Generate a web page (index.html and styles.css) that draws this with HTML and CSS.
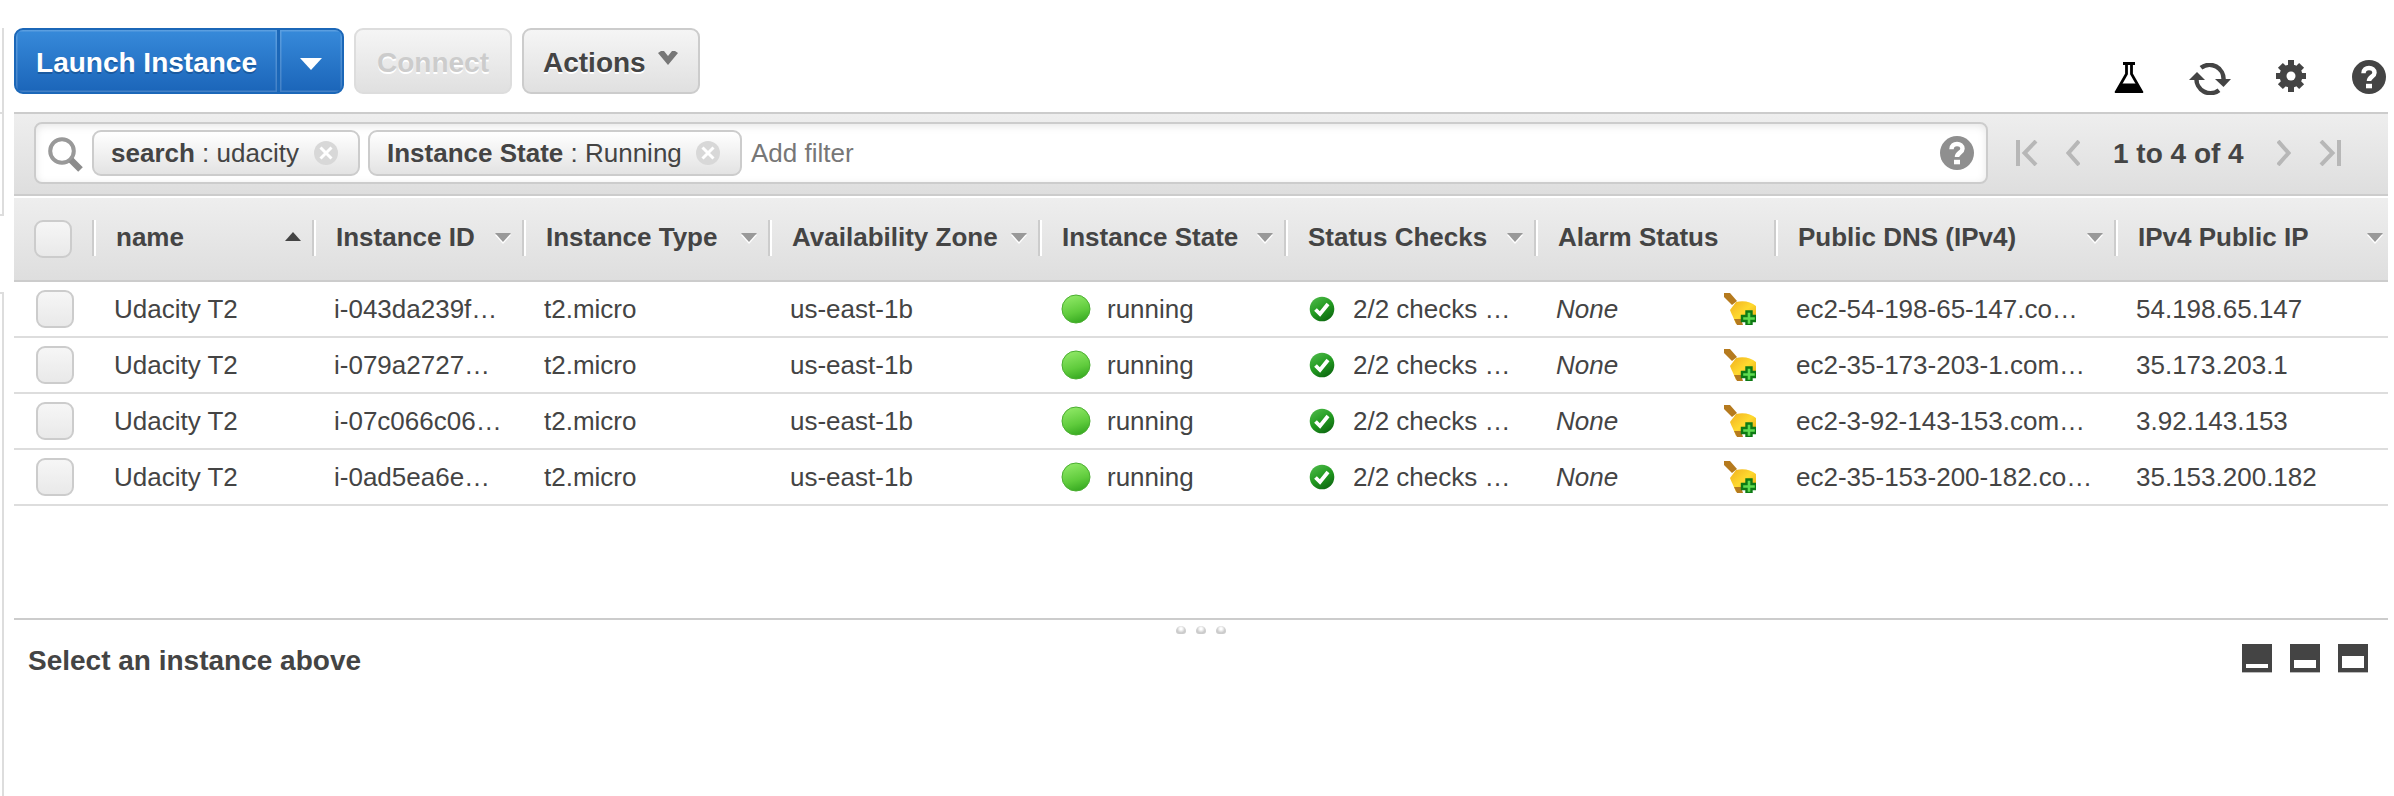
FILE: index.html
```html
<!DOCTYPE html>
<html lang="en">
<head>
<meta charset="utf-8">
<title>Instances</title>
<link rel="stylesheet" href="styles.css">
</head>
<body>
<svg class="defs" width="0" height="0">
  <defs>
    <linearGradient id="runGrad" x1=".35" y1="0" x2=".65" y2="1"><stop offset="0" stop-color="#8fe866"/><stop offset=".6" stop-color="#5fcb3c"/><stop offset="1" stop-color="#35a820"/></linearGradient>
    <linearGradient id="okGrad" x1=".2" y1="0" x2=".8" y2="1"><stop offset="0" stop-color="#4cb848"/><stop offset=".5" stop-color="#229a20"/><stop offset="1" stop-color="#0c6410"/></linearGradient>
    <linearGradient id="bellGrad" x1="0" y1="0" x2="1" y2="1"><stop offset="0" stop-color="#f0b020"/><stop offset=".5" stop-color="#ffd92e"/><stop offset="1" stop-color="#e0a010"/></linearGradient>
  </defs>
  <symbol id="dot" viewBox="0 0 30 30"><circle cx="15" cy="15" r="14" fill="url(#runGrad)" stroke="#4aae30" stroke-width="1"/></symbol>
  <symbol id="ok" viewBox="0 0 26 26"><circle cx="13" cy="13" r="12.300" fill="url(#okGrad)"/><path d="M6.500 13.500l4.500 4.500 8-10" fill="none" stroke="#fff" stroke-width="3.800"/></symbol>
  <symbol id="bell" viewBox="0 0 32 32"><path d="M0 0h6l7 8-5 4-8-8z" fill="#b57a1e"/><path d="M12 9C20 7 27 9 32 13v9L12 31C11 28 8 22 6 17z" fill="url(#bellGrad)"/><path d="M10 26l3 6h6l-2-6z" fill="#b57a1e"/><path d="M22.500 18.500h5v4.500h4.500v5h-4.500v4h-5v-4h-4.500v-5h4.500z" fill="#5fdc50" stroke="#0d7a14" stroke-width="2.400"/></symbol>
  <symbol id="help" viewBox="0 0 34 34"><circle cx="17" cy="17" r="17" fill="currentColor"/><path d="M11.500 13.200c0-3.600 2.500-5.200 5.500-5.200s5.500 1.700 5.500 4.700c0 3.900-5.500 4-5.500 8.300" fill="none" stroke="#fff" stroke-width="4.500"/><rect x="14" y="23.800" width="6" height="4.500" fill="#fff"/></symbol>
  <symbol id="x" viewBox="0 0 24 24"><circle cx="12" cy="12" r="12" fill="#d8d8d8"/><path d="M6.500 6.500l11 11m0-11l-11 11" stroke="#fff" stroke-width="3"/></symbol>
  <symbol id="down" viewBox="0 0 16 12"><path d="M0 2h16l-8 9z" fill="#fff"/><path d="M0 0h16l-8 9z" fill="#999"/></symbol>
</svg>
<div class="rail"><i class="rail-top"></i><i class="rail-tab"></i><i class="rail-gap"></i><i class="rail-bottom"></i></div>
<main class="page">
  <div class="toolbar">
    <div class="split"><button class="launch">Launch Instance</button><button class="launch-more"><svg width="22" height="12" viewBox="0 0 22 12"><path d="M0 0h22L11 12z" fill="#fff"/></svg></button></div>
    <button class="btn disabled">Connect</button>
    <button class="btn actions">Actions<svg width="20" height="14" viewBox="0 0 20 14"><path d="M0 2l3-2h3l4 5 4-5h3l3 2-10 12z" fill="#777"/></svg></button>
    <div class="tools">
      <svg class="flask" width="30" height="32" viewBox="0 0 30 32"><path d="M9 1.500h12M12.500 2v10L3 28.500h24L17.500 12V2" fill="none" stroke="#000" stroke-width="2.800"/><path d="M7 21.500h16L29.500 31H.5z" fill="#000"/></svg>
      <svg class="refresh" width="42" height="32" viewBox="0 0 42 32"><path d="M12 4.800A14 14 0 0 1 34.500 17M30 27.200A14 14 0 0 1 7.500 15" fill="none" stroke="#444" stroke-width="4.500"/><path d="M26 16h16l-7.500 8zM0 17h16L8 9z" fill="#444"/></svg>
      <svg class="gear" width="30" height="32" viewBox="-15 -16 30 32"><g fill="#444"><circle r="11.500"/><rect x="-3" y="-16" width="6" height="32"/><rect x="-15" y="-3" width="30" height="6"/><g transform="rotate(45)"><rect x="-3.500" y="-15" width="7" height="30"/><rect x="-15" y="-3.500" width="30" height="7"/></g></g><circle r="4.500" fill="#fff"/></svg>
      <svg class="help-main" width="34" height="34"><use href="#help"/></svg>
    </div>
  </div>
  <div class="filterbar">
    <div class="search">
      <svg class="mag" width="36" height="36" viewBox="0 0 36 36"><circle cx="14" cy="14" r="11.800" fill="none" stroke="#999" stroke-width="4"/><path d="M23 23l9.500 9.500" stroke="#8c8c8c" stroke-width="6.500"/></svg>
      <span class="chip chip-a"><span><b>search</b> : udacity</span><svg width="24" height="24"><use href="#x"/></svg></span>
      <span class="chip chip-b"><span><b>Instance State</b> : Running</span><svg width="24" height="24"><use href="#x"/></svg></span>
      <span class="placeholder">Add filter</span>
      <svg class="help-sub" width="34" height="34"><use href="#help"/></svg>
    </div>
    <div class="pager">
      <svg width="22" height="26" viewBox="0 0 22 26"><path d="M2 0v26M20 1L8.500 13 20 25" fill="none" stroke="#b7b7b7" stroke-width="4"/></svg>
      <svg class="prev" width="14" height="26" viewBox="0 0 14 26"><path d="M13 1L2.500 13 13 25" fill="none" stroke="#b7b7b7" stroke-width="4"/></svg>
      <b>1 to 4 of 4</b>
      <svg class="next" width="14" height="26" viewBox="0 0 14 26"><path d="M1 1l10.500 12L1 25" fill="none" stroke="#b7b7b7" stroke-width="4"/></svg>
      <svg width="22" height="26" viewBox="0 0 22 26"><path d="M20 0v26M2 1l11.500 12L2 25" fill="none" stroke="#b7b7b7" stroke-width="4"/></svg>
    </div>
  </div>
  <div class="grid head">
    <div><span class="check"></span></div>
    <div class="th">name<svg class="sort asc" width="16" height="12" viewBox="0 0 16 12"><path d="M0 10h16L8 1z" fill="#444"/></svg></div>
    <div class="th">Instance ID<svg class="sort" width="16" height="12"><use href="#down"/></svg></div>
    <div class="th">Instance Type<svg class="sort" width="16" height="12"><use href="#down"/></svg></div>
    <div class="th">Availability Zone<svg class="sort" width="16" height="12"><use href="#down"/></svg></div>
    <div class="th">Instance State<svg class="sort" width="16" height="12"><use href="#down"/></svg></div>
    <div class="th">Status Checks<svg class="sort" width="16" height="12"><use href="#down"/></svg></div>
    <div class="th">Alarm Status</div>
    <div class="th">Public DNS (IPv4)<svg class="sort" width="16" height="12"><use href="#down"/></svg></div>
    <div class="th last">IPv4 Public IP<svg class="sort" width="16" height="12"><use href="#down"/></svg></div>
  </div>
  <div class="grid row"><div><span class="check"></span></div><div class="td">Udacity T2</div><div class="td">i-043da239f…</div><div class="td">t2.micro</div><div class="td">us-east-1b</div><div class="td state"><svg width="30" height="30"><use href="#dot"/></svg>running</div><div class="td status"><svg width="26" height="26"><use href="#ok"/></svg>2/2 checks …</div><div class="td alarm"><i>None</i><svg width="32" height="32"><use href="#bell"/></svg></div><div class="td">ec2-54-198-65-147.co…</div><div class="td">54.198.65.147</div></div>
  <div class="grid row"><div><span class="check"></span></div><div class="td">Udacity T2</div><div class="td">i-079a2727…</div><div class="td">t2.micro</div><div class="td">us-east-1b</div><div class="td state"><svg width="30" height="30"><use href="#dot"/></svg>running</div><div class="td status"><svg width="26" height="26"><use href="#ok"/></svg>2/2 checks …</div><div class="td alarm"><i>None</i><svg width="32" height="32"><use href="#bell"/></svg></div><div class="td">ec2-35-173-203-1.com…</div><div class="td">35.173.203.1</div></div>
  <div class="grid row"><div><span class="check"></span></div><div class="td">Udacity T2</div><div class="td">i-07c066c06…</div><div class="td">t2.micro</div><div class="td">us-east-1b</div><div class="td state"><svg width="30" height="30"><use href="#dot"/></svg>running</div><div class="td status"><svg width="26" height="26"><use href="#ok"/></svg>2/2 checks …</div><div class="td alarm"><i>None</i><svg width="32" height="32"><use href="#bell"/></svg></div><div class="td">ec2-3-92-143-153.com…</div><div class="td">3.92.143.153</div></div>
  <div class="grid row"><div><span class="check"></span></div><div class="td">Udacity T2</div><div class="td">i-0ad5ea6e…</div><div class="td">t2.micro</div><div class="td">us-east-1b</div><div class="td state"><svg width="30" height="30"><use href="#dot"/></svg>running</div><div class="td status"><svg width="26" height="26"><use href="#ok"/></svg>2/2 checks …</div><div class="td alarm"><i>None</i><svg width="32" height="32"><use href="#bell"/></svg></div><div class="td">ec2-35-153-200-182.co…</div><div class="td">35.153.200.182</div></div>
  <section class="details">
    <div class="grip"><i></i><i></i><i></i></div>
    <div class="details-head"><b>Select an instance above</b>
      <div class="panes">
        <svg width="30" height="29" viewBox="0 0 30 29"><path d="M0 0h30v28H0z" fill="#444"/><path d="M0 28h30v1H0z" fill="#bbb"/><path d="M4 20h22v4H4z" fill="#fff"/></svg>
        <svg width="30" height="29" viewBox="0 0 30 29"><path d="M0 0h30v28H0z" fill="#444"/><path d="M0 28h30v1H0z" fill="#bbb"/><path d="M4 16h22v8H4z" fill="#fff"/></svg>
        <svg width="30" height="29" viewBox="0 0 30 29"><path d="M0 0h30v28H0z" fill="#444"/><path d="M0 28h30v1H0z" fill="#bbb"/><path d="M4 12h22v12H4z" fill="#fff"/></svg>
      </div>
    </div>
  </section>
</main>
</body>
</html>
```
FILE: styles.css
```css
* { box-sizing: border-box; }
body { margin: 0; display: flex; height: 796px; overflow: hidden; background: #fff; color: #444; font-family: "Liberation Sans", Arial, sans-serif; font-size: 26px; }
svg { display: block; flex: none; }
.defs { position: absolute; }
button { font: bold 28px "Liberation Sans", Arial, sans-serif; padding: 0; }

.rail { width: 14px; flex: none; padding-top: 28px; display: flex; flex-direction: column; }
.rail i { width: 4px; border-right: 2px solid #ddd; }
.rail-top { height: 84px; }
.rail-tab { height: 104px; border-top: 2px solid #ddd; border-bottom: 2px solid #ddd; }
.rail .rail-gap { height: 76px; border: 0; }
.rail-bottom { flex: 1; border-top: 2px solid #ddd; }

.page { width: 2374px; display: flex; flex-direction: column; }
.toolbar { height: 112px; padding-top: 28px; display: flex; align-items: flex-start; }
.split { display: flex; width: 330px; height: 66px; border: 2px solid #1b67b8; border-radius: 9px; overflow: hidden; background: #1b67b8; gap: 3px; margin-right: 10px; }
.split button { border: 0; color: #fff; background: linear-gradient(#378ada, #1b65b9); box-shadow: inset 0 0 0 1.5px rgba(255,255,255,.18); }
.split .launch { width: 261px; padding-top: 3px; text-shadow: 0 2px 0 #1a5aa0; }
.split .launch-more { flex: 1; display: flex; align-items: center; justify-content: center; padding-top: 6px; }
.btn { height: 66px; border: 2px solid #ccc; border-radius: 9px; background: linear-gradient(#f5f5f5, #e0e0e0); color: #444; text-shadow: 0 2px 0 #fff; padding-top: 3px; }
.disabled { width: 158px; margin-right: 10px; color: #ccc; border-color: #ddd; }
.actions { width: 178px; display: flex; align-items: center; gap: 12px; padding-left: 19px; }
.actions svg { margin-top: -9px; }
.tools { margin-left: auto; display: flex; padding-top: 32px; }
.flask { margin-right: 45px; margin-top: 2px; }
.refresh { margin-right: 45px; margin-top: 3px; }
.gear { margin-right: 46px; }
.help-main { margin-right: 2px; color: #444; }

.filterbar { height: 84px; border-top: 2px solid #ccc; border-bottom: 2px solid #ccc; padding: 8px 0 0 20px; display: flex; align-items: flex-start; background: linear-gradient(#eee, #dedede); }
.search { width: 1954px; height: 62px; border: 2px solid #ccc; border-radius: 8px; background: #fff; box-shadow: inset 0 2px 8px rgba(0,0,0,.1); display: flex; align-items: center; padding: 0 12px 0 10px; }
.mag { margin: 3px 8px 0 2px; }
.chip { height: 46px; border: 2px solid #ccc; border-radius: 9px; background: linear-gradient(#fff, #e3e3e3); display: flex; align-items: center; justify-content: space-between; padding: 0 20px 0 17px; margin-right: 8px; white-space: nowrap; }
.chip-a { width: 268px; }
.chip-b { width: 374px; }
.placeholder { color: #777; padding-left: 1px; }
.help-sub { color: #8f8f8f; margin-left: auto; }
.pager { height: 62px; padding-left: 28px; display: flex; align-items: center; }
.prev { margin: 0 33px 0 28px; }
.pager b { width: 132px; white-space: nowrap; font-size: 28px; padding-top: 2px; }
.next { margin: 0 28px 0 32px; }

.grid { display: grid; grid-template-columns: 78px 220px 210px 246px 270px 246px 250px 240px 340px 274px; }
.grid > div { display: flex; align-items: center; white-space: nowrap; }
.head { margin-top: 2px; height: 84px; border-bottom: 2px solid #ccc; background: linear-gradient(#eee, #dedede); }
.check { width: 38px; height: 38px; border: 2px solid #ccc; border-radius: 9px; background: linear-gradient(#f6f6f6, #e9e9e9); margin-left: 22px; }
.head .check { margin-left: 20px; }
.grid > .th { height: 36px; margin-top: 22px; font-weight: bold; padding: 0 10px 2px 22px; border-left: 2px solid #ccc; box-shadow: inset 2px 0 0 #fff; }
.th .sort { margin: 4px 1px 0 auto; }
.th .asc { margin-top: 0; }
.grid > .last { padding-right: 4px; }
.row { height: 56px; border-bottom: 2px solid #ddd; }
.td { padding-left: 22px; }
.state svg { margin: 0 16px 0 1px; }
.status svg { margin: 0 18px 0 3px; }
.alarm svg { margin: 0 18px 0 auto; }

.details { margin-top: 112px; border-top: 2px solid #ccc; }
.grip { display: flex; justify-content: center; gap: 10px; padding-top: 6px; height: 15px; }
.grip i { width: 10px; height: 8px; border-radius: 5px 5px 3px 3px; background: radial-gradient(circle at 50% 35%, #fff 1px, #ccc 4px); }
.details-head { display: flex; align-items: flex-start; justify-content: space-between; padding: 9px 20px 0 14px; font-size: 28px; }
.details-head b { padding-top: 1px; }
.panes { display: flex; gap: 18px; }
```
